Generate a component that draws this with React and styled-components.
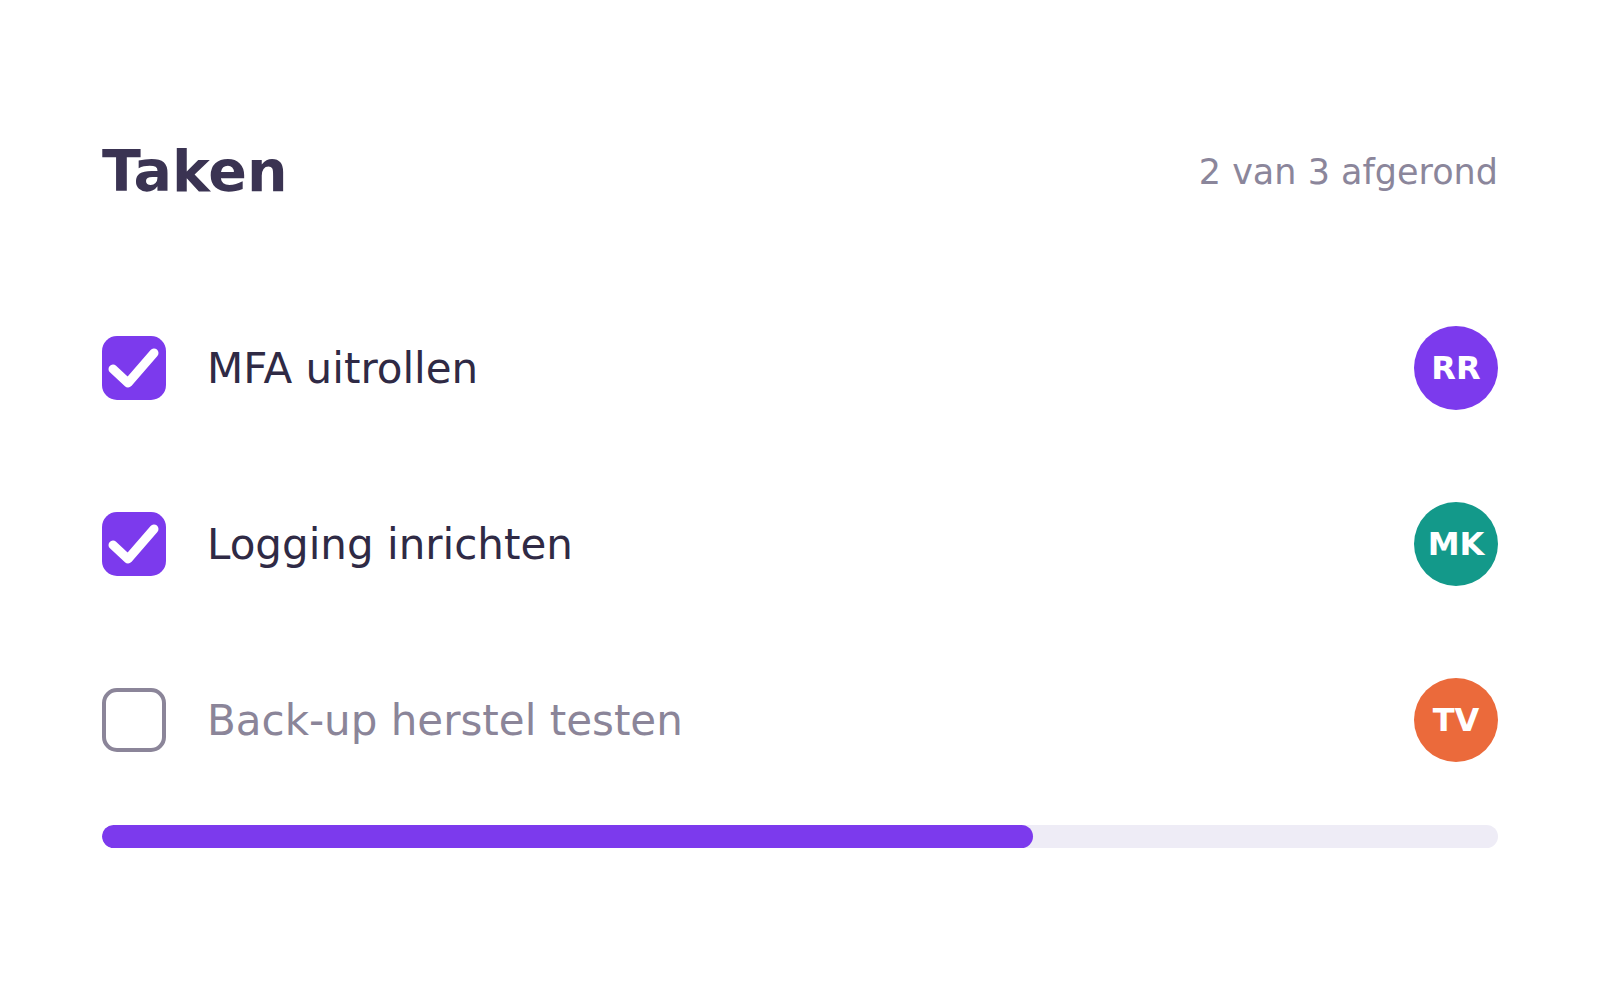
import React from "react";
import styled, { createGlobalStyle } from "styled-components";

// ----- Global -----
const GlobalStyle = createGlobalStyle`
  body {
    margin: 0;
    background: #fff;
    font-family: "DejaVu Sans", "Liberation Sans", sans-serif;
  }
`;

// ----- Styled Components -----
const Page = styled.div`
  width: 1396px;
  margin: 0 auto;
  padding-top: 131px;
`;

const Header = styled.div`
  height: 80px;
  display: flex;
  align-items: center;
  justify-content: space-between;
`;

const Title = styled.h1`
  margin: 0;
  font-size: 57px;
  font-weight: 700;
  color: #3a3352;
`;

const Summary = styled.span`
  font-size: 35px;
  color: #8b869b;
  padding-top: 2px;
`;

const List = styled.ul`
  list-style: none;
  margin: 69px 0 0;
  padding: 0;
`;

const Row = styled.li`
  height: 176px;
  display: flex;
  align-items: center;
  gap: 41px;
`;

const Box = styled.span`
  width: 64px;
  height: 64px;
  flex-shrink: 0;
  box-sizing: border-box;
  border-radius: 15px;
  display: flex;
  align-items: center;
  justify-content: center;
  background: ${(p) => (p.$done ? "#7c3aed" : "#fff")};
  border: ${(p) => (p.$done ? "none" : "4px solid #8b8599")};
`;

const Label = styled.span`
  flex: 1;
  font-size: 42px;
  color: ${(p) => (p.$done ? "#2f2a45" : "#8b8599")};
`;

const Avatar = styled.span`
  width: 84px;
  height: 84px;
  border-radius: 50%;
  display: flex;
  align-items: center;
  justify-content: center;
  background: ${(p) => p.$color};
  color: #fff;
  font-size: 32px;
  font-weight: 700;
`;

const Track = styled.div`
  margin-top: 17px;
  height: 23px;
  border-radius: 12px;
  background: #eeecf6;
  overflow: hidden;
`;

const Fill = styled.div`
  height: 100%;
  border-radius: 12px;
  background: #7c3aed;
`;

const tasks = [
  { title: "MFA uitrollen", done: true, initials: "RR", color: "#7c3aed" },
  { title: "Logging inrichten", done: true, initials: "MK", color: "#13998a" },
  { title: "Back-up herstel testen", done: false, initials: "TV", color: "#eb6a3b" },
];

function Check() {
  return (
    <svg width="64" height="64" viewBox="0 0 64 64">
      <path
        d="M11 33 L26 47 L52 17"
        fill="none"
        stroke="#fff"
        strokeWidth="9"
        strokeLinecap="round"
        strokeLinejoin="round"
      />
    </svg>
  );
}

// ----- Component -----
export default function App() {
  const doneCount = tasks.filter((t) => t.done).length;
  const pct = (doneCount / tasks.length) * 100;

  return (
    <>
      <GlobalStyle />
      <Page>
        <Header>
          <Title>Taken</Title>
          <Summary>
            {doneCount} van {tasks.length} afgerond
          </Summary>
        </Header>

        <List>
          {tasks.map((t) => (
            <Row key={t.title}>
              <Box $done={t.done}>{t.done && <Check />}</Box>
              <Label $done={t.done}>{t.title}</Label>
              <Avatar $color={t.color}>{t.initials}</Avatar>
            </Row>
          ))}
        </List>

        <Track>
          <Fill style={{ width: `${pct}%` }} />
        </Track>
      </Page>
    </>
  );
}
